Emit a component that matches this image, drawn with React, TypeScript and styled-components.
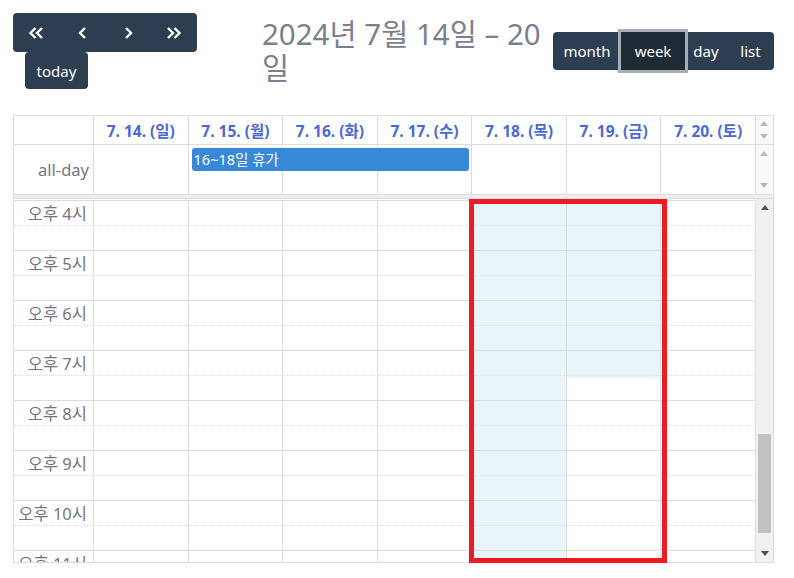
import React from "react";
import styled, { createGlobalStyle } from "styled-components";

const GlobalStyle = createGlobalStyle`
  html, body {
    margin: 0;
    padding: 0;
    background: #fff;
  }
  body {
    font-family: "Noto Sans", "Noto Sans CJK KR", sans-serif;
    color: #333;
  }
`;

const days = [
  "7. 14. (일)",
  "7. 15. (월)",
  "7. 16. (화)",
  "7. 17. (수)",
  "7. 18. (목)",
  "7. 19. (금)",
  "7. 20. (토)",
];

// how many half-hour slots from the top are highlighted, per day
const highlightSlots = [0, 0, 0, 0, 99, 7, 0];

const hours = [16, 17, 18, 19, 20, 21, 22, 23];

const Page = styled.div`
  padding: 13px 20px 0 13px;
  width: 761px;
`;

const Toolbar = styled.div`
  display: flex;
  align-items: center;
  height: 76px;
`;

const LeftChunk = styled.div`
  display: flex;
  flex-wrap: wrap;
  width: 230px;
`;

const ButtonGroup = styled.div`
  display: flex;
  background: #2c3e50;
  border-radius: 4px;
`;

const NavButton = styled.button`
  width: 46px;
  height: 39px;
  border: 0;
  padding: 0;
  background: transparent;
  color: #fff;
  display: flex;
  align-items: center;
  justify-content: center;
`;

const TodayButton = styled.button`
  margin-left: 12px;
  width: 63px;
  height: 37px;
  border: 0;
  border-radius: 4px;
  background: #2c3e50;
  color: #fff;
  font-family: "Noto Sans", sans-serif;
  font-size: 15px;
  padding: 0;
`;

const Title = styled.h2`
  margin: 0 0 0 19px;
  width: 283px;
  font-size: 29.5px;
  line-height: 34px;
  font-weight: 400;
  color: #7c7f8e;
`;

const ViewGroup = styled.div`
  margin-left: auto;
  display: flex;
  background: #2c3e50;
  border-radius: 4px;
  height: 38px;
`;

const ViewButton = styled.button<{ $active?: boolean; $w: number }>`
  width: ${(p) => p.$w}px;
  height: 38px;
  border: 0;
  padding: 0;
  border-radius: 0;
  background: ${(p) => (p.$active ? "#1e2b37" : "transparent")};
  box-shadow: ${(p) => (p.$active ? "0 0 0 3px #a6adb4" : "none")};
  position: relative;
  z-index: ${(p) => (p.$active ? 1 : 0)};
  color: #fff;
  font-family: "Noto Sans", sans-serif;
  font-size: 15px;
`;

const Grid = styled.div`
  position: relative;
  margin-top: 26px;
  border: 1px solid #ddd;
  width: 759px;
`;

const Row = styled.div<{ $h: number }>`
  display: grid;
  grid-template-columns: 80px repeat(7, 1fr) 17px;
  grid-template-rows: 100%;
  height: ${(p) => p.$h}px;
  border-bottom: 1px solid #ddd;
`;

const HeadCell = styled.div<{ $col: number }>`
  grid-row: 1;
  grid-column: ${(p) => p.$col};
  border-right: 1px solid #ddd;
  display: flex;
  align-items: center;
  justify-content: center;
  font-size: 15.5px;
  font-weight: 700;
  color: #4a69d5;
  white-space: nowrap;
`;

const AxisCell = styled.div`
  grid-row: 1;
  grid-column: 1;
  border-right: 1px solid #ddd;
  display: flex;
  align-items: center;
  justify-content: flex-end;
  padding-right: 4px;
  font-size: 16.5px;
  color: #757580;
`;

const DayCell = styled.div<{ $col: number }>`
  grid-row: 1;
  grid-column: ${(p) => p.$col};
  border-right: 1px solid #ddd;
`;

const MiniScroll = styled.div<{ $pad: number }>`
  grid-row: 1;
  grid-column: 9;
  background: #f9f9f9;
  display: flex;
  flex-direction: column;
  justify-content: space-between;
  align-items: center;
  padding: ${(p) => p.$pad}px 0;
`;

const Event = styled.div`
  grid-row: 1;
  grid-column: 3 / 6;
  align-self: start;
  margin: 3px 3px 0 3px;
  height: 23px;
  background: #3788d8;
  border-radius: 3px;
  color: #fff;
  font-size: 14.5px;
  line-height: 23px;
  padding-left: 2px;
  z-index: 1;
`;

const Divider = styled.div`
  height: 3px;
  background: #eee;
  border-bottom: 1px solid #ddd;
`;

const Body = styled.div`
  display: flex;
  height: 363px;
  overflow: hidden;
`;

const Slots = styled.div`
  flex: 1;
  padding-top: 1px;
`;

const SlotRow = styled.div`
  display: grid;
  grid-template-columns: 80px repeat(7, 1fr);
  height: 25px;
`;

const SlotCell = styled.div<{ $minor: boolean; $hl?: boolean }>`
  border-top: 1px ${(p) => (p.$minor ? "dotted" : "solid")} #ddd;
  border-right: 1px solid #ddd;
  background: ${(p) => (p.$hl ? "#e8f5fa" : "transparent")};
  background-clip: padding-box;
`;

const SlotLabel = styled(SlotCell)`
  display: flex;
  align-items: center;
  justify-content: flex-end;
  padding: 0 6px 3px 0;
  font-size: 16.5px;
  color: #757580;
  white-space: nowrap;
`;

const Scrollbar = styled.div`
  width: 17px;
  background: #f1f1f1;
  display: flex;
  flex-direction: column;
`;

const ScrollArrow = styled.div`
  height: 17px;
  display: flex;
  align-items: center;
  justify-content: center;
`;

const Track = styled.div`
  flex: 1;
`;

const Thumb = styled.div<{ $top: number; $h: number }>`
  margin: ${(p) => p.$top}px 2px 0 2px;
  height: ${(p) => p.$h}px;
  background: #c1c1c1;
`;

const Selection = styled.div`
  position: absolute;
  left: 455px;
  top: 83px;
  width: 198px;
  height: 364px;
  box-sizing: border-box;
  border: 5px solid #ed1c24;
  pointer-events: none;
  z-index: 2;
`;

const Chevron = ({ dir, double }: { dir: "left" | "right"; double?: boolean }) => {
  const one = dir === "left" ? "M7 1 L2 6 L7 11" : "M2 1 L7 6 L2 11";
  if (!double) {
    return (
      <svg width="9" height="12" viewBox="0 0 9 12">
        <path d={one} fill="none" stroke="#fff" strokeWidth="2.4" />
      </svg>
    );
  }
  const two =
    dir === "left"
      ? ["M7.5 1 L2.5 6 L7.5 11", "M14 1 L9 6 L14 11"]
      : ["M2 1 L7 6 L2 11", "M8.5 1 L13.5 6 L8.5 11"];
  return (
    <svg width="16" height="12" viewBox="0 0 16 12">
      {two.map((d) => (
        <path key={d} d={d} fill="none" stroke="#fff" strokeWidth="2.4" />
      ))}
    </svg>
  );
};

const Tri = ({ up, color }: { up?: boolean; color: string }) => (
  <svg width="8" height="5" viewBox="0 0 8 5">
    <polygon points={up ? "0,5 8,5 4,0" : "0,0 8,0 4,5"} fill={color} />
  </svg>
);

export default function App() {
  return (
    <Page>
      <GlobalStyle />
      <Toolbar>
        <LeftChunk>
          <ButtonGroup>
            <NavButton aria-label="prev year">
              <Chevron dir="left" double />
            </NavButton>
            <NavButton aria-label="prev">
              <Chevron dir="left" />
            </NavButton>
            <NavButton aria-label="next">
              <Chevron dir="right" />
            </NavButton>
            <NavButton aria-label="next year">
              <Chevron dir="right" double />
            </NavButton>
          </ButtonGroup>
          <TodayButton>today</TodayButton>
        </LeftChunk>
        <Title>2024년 7월 14일 – 20일</Title>
        <ViewGroup>
          <ViewButton $w={68}>month</ViewButton>
          <ViewButton $w={64} $active>
            week
          </ViewButton>
          <ViewButton $w={42}>day</ViewButton>
          <ViewButton $w={47}>list</ViewButton>
        </ViewGroup>
      </Toolbar>

      <Grid>
        <Row $h={28}>
          <DayCell $col={1} />
          {days.map((d, i) => (
            <HeadCell key={d} $col={i + 2}>
              {d}
            </HeadCell>
          ))}
          <MiniScroll $pad={5}>
            <Tri up color="#b8b8b8" />
            <Tri color="#b8b8b8" />
          </MiniScroll>
        </Row>

        <Row $h={49}>
          <AxisCell>all-day</AxisCell>
          {days.map((d, i) => (
            <DayCell key={d} $col={i + 2} />
          ))}
          <Event>16~18일 휴가</Event>
          <MiniScroll $pad={6}>
            <Tri up color="#b8b8b8" />
            <Tri color="#b8b8b8" />
          </MiniScroll>
        </Row>

        <Divider />

        <Body>
          <Slots>
            {hours.flatMap((h) =>
              [0, 1].map((half) => {
                const slot = (h - 16) * 2 + half;
                return (
                  <SlotRow key={`${h}-${half}`}>
                    <SlotLabel $minor={half === 1}>
                      {half === 0 ? `오후 ${h - 12}시` : ""}
                    </SlotLabel>
                    {days.map((d, i) => (
                      <SlotCell
                        key={d}
                        $minor={half === 1}
                        $hl={slot < highlightSlots[i]}
                      />
                    ))}
                  </SlotRow>
                );
              })
            )}
          </Slots>
          <Scrollbar>
            <ScrollArrow>
              <Tri up color="#505050" />
            </ScrollArrow>
            <Track>
              <Thumb $top={218} $h={99} />
            </Track>
            <ScrollArrow>
              <Tri color="#505050" />
            </ScrollArrow>
          </Scrollbar>
        </Body>

        <Selection />
      </Grid>
    </Page>
  );
}
